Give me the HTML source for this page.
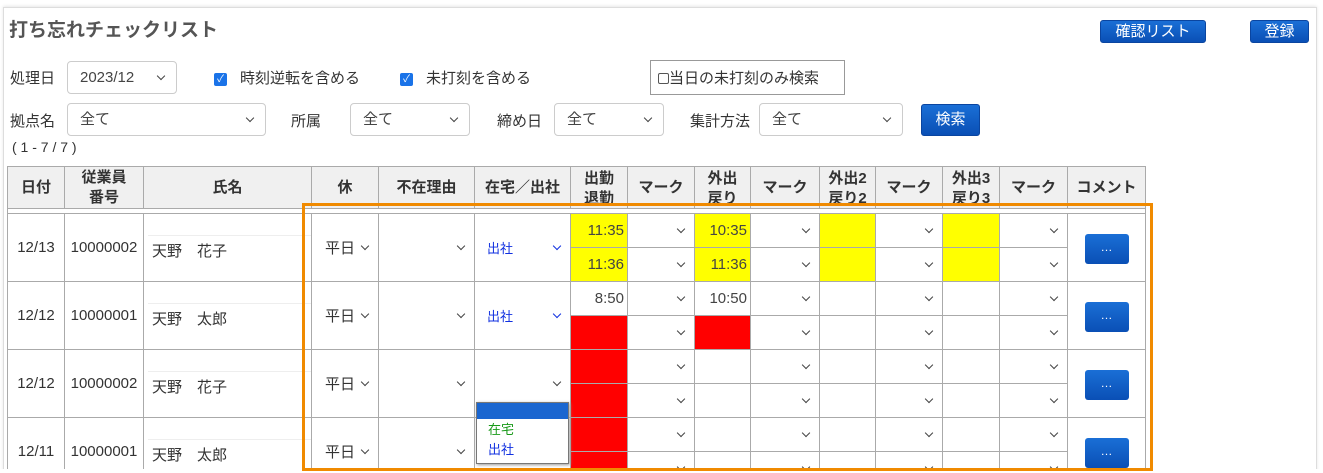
<!DOCTYPE html>
<html style="overflow:hidden;height:473px"><head><meta charset="utf-8"><style>
*{box-sizing:border-box;margin:0;padding:0}
body{width:1323px;height:473px;overflow:hidden;background:#fff;font-family:"Liberation Sans","Noto Sans CJK JP",sans-serif;color:#333;font-size:15px;position:relative}
.a{position:absolute}
.frame{left:3px;top:7px;width:1314px;height:480px;border:1px solid #ddd;box-shadow:0 -1px 3px #e8e8e8}
.title{left:9px;top:15px;font-size:19px;font-weight:bold;color:#555}
.btn{background:linear-gradient(#1a6fd6,#0a4fb5);color:#fff;border-radius:3px;text-align:center;font-size:15px;border:1px solid #0a45a0}
.sel{border:1px solid #ccc;border-radius:4px;background:#fff;padding-left:12px;font-size:15px;color:#444}
.v{display:inline-block;width:6px;height:6px;border-right:1.5px solid #444;border-bottom:1.5px solid #444;transform:rotate(45deg)}
.vb{border-color:#1030e0}
.sel .v{position:absolute;right:12px;top:11px}
.cb{width:13px;height:13px;background:#1a73e8;border-radius:2px;color:#fff;font-size:10px;line-height:13px;text-align:center}
table{position:absolute;left:7px;top:166px;border-collapse:collapse;table-layout:fixed}
td,th{border:1px solid #aaa;padding:0;position:relative;font-size:15px;white-space:nowrap}
th{background:#f0f0f0;font-weight:bold;height:42px;line-height:20px;overflow:hidden}
th div{height:40px;overflow:hidden;display:flex;align-items:center;justify-content:center}
th div.t{align-items:flex-start;padding-top:1px}
td{height:34px;text-align:center}
.sp td{height:5px;background:#fff}
.r{text-align:right;padding-right:3px;color:#444}
.y{background:#ffff00}.rd{background:#ff0000}
.ch .v{position:absolute;right:10px;top:12px}
.mid .v{top:29px}
.dot{display:inline-block;width:44px;height:30px;margin-top:2px;background:linear-gradient(#1a6fd6,#0a4fb5);border-radius:3px;color:#fff;line-height:26px;font-size:12px}
.nm{text-align:left;padding-left:8px}
.nm span{display:block;border-top:1px solid #eee;margin-left:-4px;padding-left:4px;padding-top:4px}
.blue{color:#1030e0;font-size:13px}
</style></head><body>
<div class="a frame"></div>
<div class="a title">打ち忘れチェックリスト</div>
<div class="a btn" style="left:1100px;top:20px;width:106px;height:23px;line-height:21px">確認リスト</div>
<div class="a btn" style="left:1250px;top:20px;width:59px;height:23px;line-height:21px">登録</div>

<div class="a" style="left:10px;top:67px">処理日</div>
<div class="a sel" style="left:67px;top:61px;width:110px;height:33px;line-height:31px">2023/12<span class="v"></span></div>
<div class="a cb" style="left:214px;top:73px">✓</div>
<div class="a" style="left:240px;top:67px">時刻逆転を含める</div>
<div class="a cb" style="left:400px;top:73px">✓</div>
<div class="a" style="left:426px;top:67px">未打刻を含める</div>
<div class="a" style="left:650px;top:60px;width:195px;height:35px;border:1px solid #999;padding:6px 0 0 7px">
<span style="display:inline-block;width:11px;height:11px;border:1px solid #555;border-radius:2px;vertical-align:-1px"></span>当日の未打刻のみ検索</div>

<div class="a" style="left:10px;top:110px">拠点名</div>
<div class="a sel" style="left:67px;top:103px;width:199px;height:33px;line-height:31px">全て<span class="v"></span></div>
<div class="a" style="left:291px;top:110px">所属</div>
<div class="a sel" style="left:350px;top:103px;width:120px;height:33px;line-height:31px">全て<span class="v"></span></div>
<div class="a" style="left:497px;top:110px">締め日</div>
<div class="a sel" style="left:554px;top:103px;width:110px;height:33px;line-height:31px">全て<span class="v"></span></div>
<div class="a" style="left:690px;top:110px">集計方法</div>
<div class="a sel" style="left:759px;top:103px;width:144px;height:33px;line-height:31px">全て<span class="v"></span></div>
<div class="a btn" style="left:921px;top:104px;width:59px;height:32px;line-height:30px">検索</div>
<div class="a" style="left:12px;top:139px;font-size:14px">( 1 - 7 / 7 )</div>

<table>
<colgroup><col style="width:57px"><col style="width:79px"><col style="width:168px"><col style="width:67px"><col style="width:96px"><col style="width:96px"><col style="width:57px"><col style="width:67px"><col style="width:56px"><col style="width:69px"><col style="width:56px"><col style="width:67px"><col style="width:57px"><col style="width:68px"><col style="width:78px"></colgroup>
<tr><th><div>日付</div></th><th><div>従業員<br>番号</div></th><th><div>氏名</div></th><th><div>休</div></th><th><div>不在理由</div></th><th><div>在宅／出社</div></th><th><div class="t">出勤<br>退勤</div></th><th><div>マーク</div></th><th><div class="t">外出<br>戻り</div></th><th><div>マーク</div></th><th><div class="t">外出2<br>戻り2</div></th><th><div>マーク</div></th><th><div class="t">外出3<br>戻り3</div></th><th><div>マーク</div></th><th><div>コメント</div></th></tr>
<tr class="sp"><td colspan="15"></td></tr>

<tr><td rowspan="2">12/13</td><td rowspan="2">10000002</td><td rowspan="2" class="nm"><span>天野　花子</span></td><td rowspan="2" class="ch mid" style="text-align:left;padding-left:13px">平日<span class="v"></span></td><td rowspan="2" class="ch mid"><span class="v"></span></td><td rowspan="2" class="ch mid" style="text-align:left;padding-left:12px"><span class="blue">出社</span><span class="v vb"></span></td>
<td class="r y">11:35</td><td class="ch"><span class="v"></span></td><td class="r y">10:35</td><td class="ch"><span class="v"></span></td><td class="y"></td><td class="ch"><span class="v"></span></td><td class="y"></td><td class="ch"><span class="v"></span></td><td rowspan="2"><span class="dot">…</span></td></tr>
<tr><td class="r y">11:36</td><td class="ch"><span class="v"></span></td><td class="r y">11:36</td><td class="ch"><span class="v"></span></td><td class="y"></td><td class="ch"><span class="v"></span></td><td class="y"></td><td class="ch"><span class="v"></span></td></tr>

<tr><td rowspan="2">12/12</td><td rowspan="2">10000001</td><td rowspan="2" class="nm"><span>天野　太郎</span></td><td rowspan="2" class="ch mid" style="text-align:left;padding-left:13px">平日<span class="v"></span></td><td rowspan="2" class="ch mid"><span class="v"></span></td><td rowspan="2" class="ch mid" style="text-align:left;padding-left:12px"><span class="blue">出社</span><span class="v vb"></span></td>
<td class="r">8:50</td><td class="ch"><span class="v"></span></td><td class="r">10:50</td><td class="ch"><span class="v"></span></td><td></td><td class="ch"><span class="v"></span></td><td></td><td class="ch"><span class="v"></span></td><td rowspan="2"><span class="dot">…</span></td></tr>
<tr><td class="rd"></td><td class="ch"><span class="v"></span></td><td class="rd"></td><td class="ch"><span class="v"></span></td><td></td><td class="ch"><span class="v"></span></td><td></td><td class="ch"><span class="v"></span></td></tr>

<tr><td rowspan="2">12/12</td><td rowspan="2">10000002</td><td rowspan="2" class="nm"><span>天野　花子</span></td><td rowspan="2" class="ch mid" style="text-align:left;padding-left:13px">平日<span class="v"></span></td><td rowspan="2" class="ch mid"><span class="v"></span></td><td rowspan="2" class="ch mid"><span class="v"></span></td>
<td class="rd"></td><td class="ch"><span class="v"></span></td><td></td><td class="ch"><span class="v"></span></td><td></td><td class="ch"><span class="v"></span></td><td></td><td class="ch"><span class="v"></span></td><td rowspan="2"><span class="dot">…</span></td></tr>
<tr><td class="rd"></td><td class="ch"><span class="v"></span></td><td></td><td class="ch"><span class="v"></span></td><td></td><td class="ch"><span class="v"></span></td><td></td><td class="ch"><span class="v"></span></td></tr>

<tr><td rowspan="2">12/11</td><td rowspan="2">10000001</td><td rowspan="2" class="nm"><span>天野　太郎</span></td><td rowspan="2" class="ch mid" style="text-align:left;padding-left:13px">平日<span class="v"></span></td><td rowspan="2" class="ch mid"><span class="v"></span></td><td rowspan="2"></td>
<td class="rd"></td><td class="ch"><span class="v"></span></td><td></td><td class="ch"><span class="v"></span></td><td></td><td class="ch"><span class="v"></span></td><td></td><td class="ch"><span class="v"></span></td><td rowspan="2"><span class="dot">…</span></td></tr>
<tr><td class="rd"></td><td class="ch"><span class="v"></span></td><td></td><td class="ch"><span class="v"></span></td><td></td><td class="ch"><span class="v"></span></td><td></td><td class="ch"><span class="v"></span></td></tr>
</table>

<div class="a" style="left:476px;top:402px;width:93px;height:62px;border:1px solid #777;background:#fff;box-shadow:1px 1px 3px #999;font-size:13px">
<div style="height:16px;background:#1a66d0"></div>
<div style="color:#1a9a1a;padding-left:11px;line-height:21px">在宅</div>
<div style="color:#1030e0;padding-left:11px;line-height:20px">出社</div>
</div>
<div class="a" style="left:0;top:469px;width:1323px;height:10px;background:#fff"></div>
<div class="a" style="left:302px;top:203px;width:851px;height:268px;border:3px solid #f08a00"></div>
</body></html>
